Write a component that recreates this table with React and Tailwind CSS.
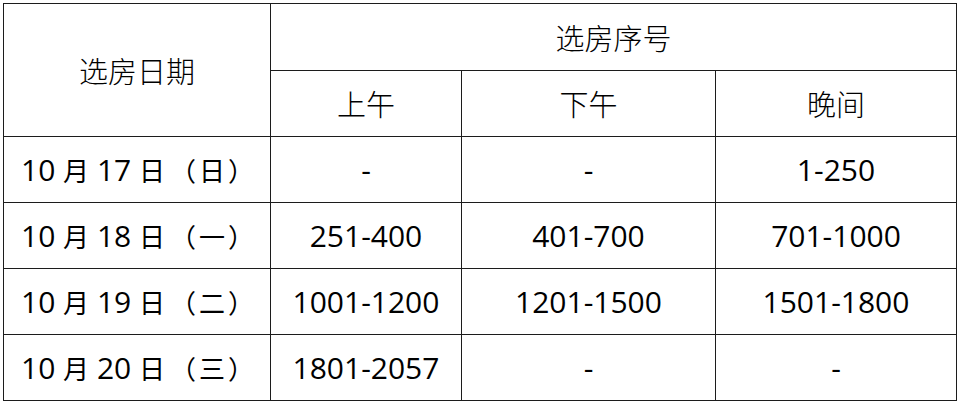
import React from "react";

const rows = [
  ["10", "17", "日", "-", "-", "1-250"],
  ["10", "18", "一", "251-400", "401-700", "701-1000"],
  ["10", "19", "二", "1001-1200", "1201-1500", "1501-1800"],
  ["10", "20", "三", "1801-2057", "-", "-"],
];

const cell = "border border-[#1c1c1c] text-center align-middle p-0";
const cjk = "text-[26px] font-['Noto_Sans_CJK_SC',sans-serif]";

export default function App() {
  return (
    <div className="w-[959px] h-[405px] bg-white pl-[3px] pt-[3px]">
      <table className="border-collapse text-black leading-none">
        <colgroup>
          <col className="w-[267px]" />
          <col className="w-[191px]" />
          <col className="w-[254px]" />
          <col className="w-[241px]" />
        </colgroup>
        <thead className="text-[29px] font-light font-['Noto_Sans_CJK_SC',sans-serif]">
          <tr className="h-[67px]">
            <th rowSpan={2} className={`${cell} font-light`}>选房日期</th>
            <th colSpan={3} className={`${cell} font-light`}>选房序号</th>
          </tr>
          <tr className="h-[66px]">
            <th className={`${cell} font-light`}>上午</th>
            <th className={`${cell} font-light`}>下午</th>
            <th className={`${cell} font-light`}>晚间</th>
          </tr>
        </thead>
        <tbody className="text-[30px] font-['Open_Sans','Noto_Sans_CJK_SC',sans-serif]">
          {rows.map((r, i) => (
            <tr key={i} className="h-[66px]">
              <td className={`${cell} text-left pl-[17px] whitespace-nowrap`}>
                {r[0]} <span className={cjk}>月</span> {r[1]} <span className={cjk}>日</span>
                <span className={`${cjk} ml-[5px] tracking-[3px]`}>（{r[2]}）</span>
              </td>
              <td className={cell}>{r[3]}</td>
              <td className={cell}>{r[4]}</td>
              <td className={cell}>{r[5]}</td>
            </tr>
          ))}
        </tbody>
      </table>
    </div>
  );
}
